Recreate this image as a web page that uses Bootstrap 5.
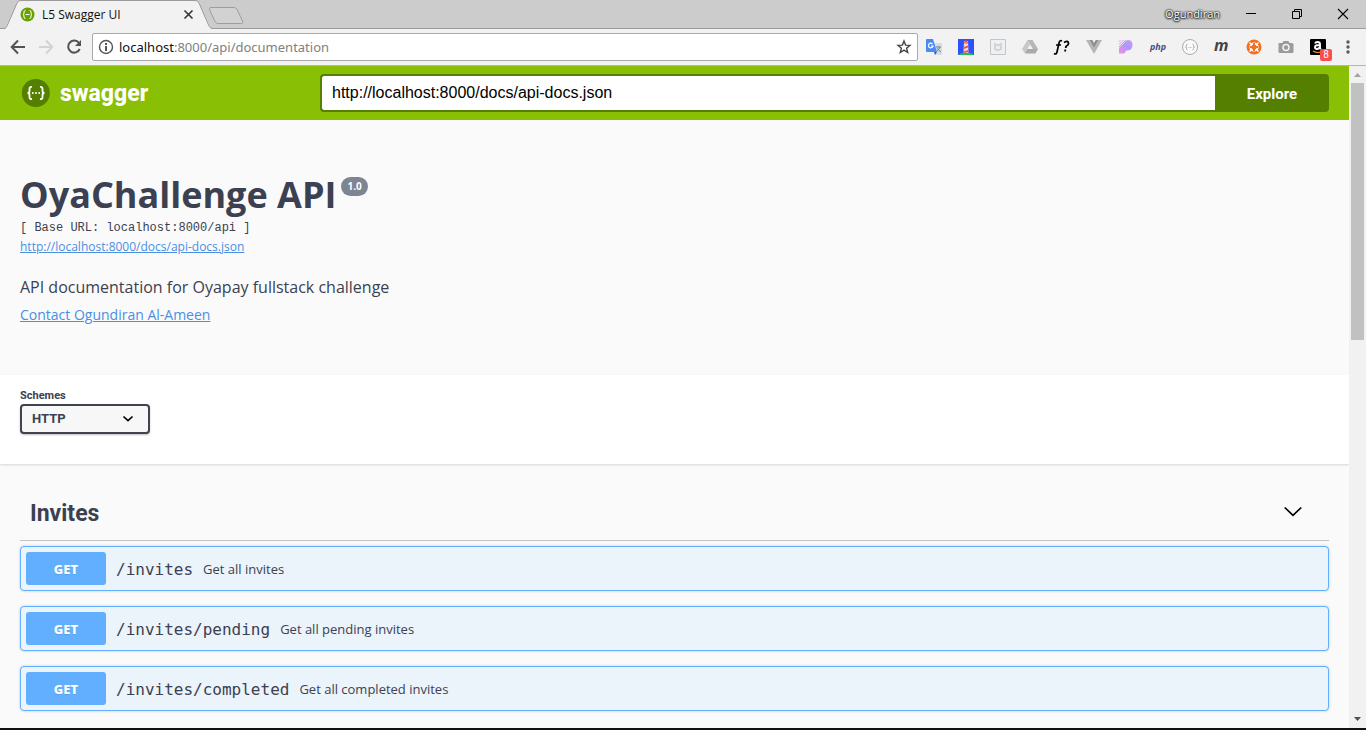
<!DOCTYPE html>
<html lang="en">
<head>
<meta charset="utf-8">
<meta name="viewport" content="width=device-width, initial-scale=1">
<title>L5 Swagger UI</title>
<link href="https://cdn.jsdelivr.net/npm/bootstrap@5.3.0/dist/css/bootstrap.min.css" rel="stylesheet">
<style>
  :root { --ink: #3b4151; --green: #89bf04; --green-dark: #547f00; --get: #61affe; }
  body { font-family: "Open Sans", sans-serif; color: var(--ink); background: #fafafa; }
  button { font-family: inherit; }
  svg { display: block; flex: none; }

  /* browser frame */
  .titlebar { height: 29px; background: #ccc; border-bottom: 1px solid #9a9a9a; }
  .browser-tab { width: 208px; height: 29px; margin-bottom: -1px; padding: 0 14px 0 20px; color: #111; }
  .browser-tab .tab-shape { position: absolute; left: 0; top: 0; }
  .tab-label { font: 12px/16px "Open Sans", sans-serif; margin-left: 7px; }
  .plain-btn { border: 0; padding: 0; background: none; color: inherit; }
  .profile { color: #fff; font: 11px/16px "Open Sans", sans-serif; text-shadow: 0 0 2px #000, 0 0 2px #000, 0 1px 2px #333; }
  .win-btn { width: 46px; height: 28px; }
  .toolbar { height: 37px; background: #f2f2f2; border-bottom: 1px solid #b6b4b6; padding: 0 16px 1px 10px; }
  .nav-gap { gap: 12px; }
  .omnibox { height: 28px; background: #fff; border: 1px solid #a9a9a9; border-radius: 2px; padding: 0 5px; margin: 0 8px 0 10px; }
  .address { font: 13px/20px "Noto Sans", sans-serif; color: #808080; padding-left: 5px; }
  .address b { font-weight: 400; color: #111; }
  .ext { width: 16px; height: 16px; }
  .ext-count { position: absolute; left: 10px; top: 10px; width: 12px; height: 12px; border-radius: 2px; background: #fb4d4d; color: #fff; font: 10px/12px Roboto, sans-serif; text-align: center; }
  .scroll-track { width: 17px; background: #f1f1f1; }
  .scroll-thumb { width: 13px; height: 257px; background: #c1c1c1; }
  .taskbar-edge { height: 2px; background: #111; }

  /* documentation page */
  .topbar { background: var(--green); padding: 8px 20px; }
  .brand { width: 300px; color: #fff; font: 800 23px/36px Roboto, sans-serif; }
  .brand span { padding-top: 2px; }
  .spec-url { height: 38px; border: 2px solid var(--green-dark); border-right: 0; border-radius: 4px 0 0 4px; padding: 0 10px; color: #000; background: #fff; font: 16px/20px "Liberation Sans", sans-serif; }
  .explore { width: 114px; border-radius: 0 4px 4px 0; background: var(--green-dark); color: #fff; font: 700 15px/20px Roboto, sans-serif; padding-top: 2px; }
  .info { padding: 50px 20px 48px; height: 255px; }
  .info h1 { font-size: 36px; font-weight: 700; line-height: 50px; }
  .version { margin: 7px 0 0 5px; height: 19px; padding: 0 6px; border-radius: 10px; background: #7d8492; color: #fff; font: 700 10px/19px "Open Sans", sans-serif; }
  .base-url { font: 12px/16px "Liberation Mono", monospace; }
  .info a { color: #4990e2; }
  .spec-link { font-size: 12px; line-height: 20px; margin-top: 1px; }
  .about { font-size: 16px; line-height: 24px; margin-top: 18px; }
  .contact { font-size: 14px; line-height: 20px; margin-top: 6px; }
  .schemes { background: #fff; height: 89px; padding: 13px 20px 30px; box-shadow: 0 1px 2px rgba(0,0,0,.15); }
  .schemes label { font: 700 11px/16px Roboto, sans-serif; }
  .scheme-select { width: 130px; height: 30px; border: 2px solid #41444e; border-radius: 4px; padding: 0 10px; color: var(--ink); font: 700 13px/20px Roboto, sans-serif; appearance: none; box-shadow: 0 1px 2px rgba(0,0,0,.25);
    background: #f7f7f7 url("data:image/svg+xml,%3Csvg xmlns='http://www.w3.org/2000/svg' width='12' height='8' fill='none' stroke='%23000' stroke-width='1.7'%3E%3Cpath d='M1.5 1.5 6 5.7 10.500 1.5'/%3E%3C/svg%3E") right 14px center no-repeat; }
  .operations { padding: 20px 20px 0; }
  .tag-head { height: 57px; padding: 0 27px 0 10px; border-bottom: 1px solid rgba(59,65,81,.3); margin-bottom: 5px; }
  .tag-head h2 { font: 700 23px/30px Roboto, sans-serif; padding-top: 3px; }
  .operation { height: 45px; padding: 5px; margin-bottom: 15px; border: 1px solid var(--get); border-radius: 4px; background: #ebf3fb; box-shadow: 0 0 3px rgba(0,0,0,.19); color: var(--ink); text-align: left; }
  .method { width: 80px; height: 33px; border-radius: 3px; background: var(--get); color: #fff; font: 800 13px/34px "Noto Sans", sans-serif; text-align: center; text-shadow: 0 1px 0 rgba(0,0,0,.1); }
  .route { font: 16px/20px "DejaVu Sans Mono", monospace; padding: 2px 10px 0; }
  .summary-text { font-size: 13px; line-height: 20px; }
</style>
</head>
<body>
<div class="d-flex flex-column vh-100 overflow-hidden">

  <header>
    <div class="titlebar d-flex">
      <div class="browser-tab position-relative d-flex align-items-center">
        <svg class="tab-shape" width="214" height="29"><path d="M5 29 17 3Q18 .5 21 .5H195Q198 .5 199 3L211 28.500 214 29Z" fill="#f2f2f2"/><path d="M0 28.500H4Q6 28.500 7 26L17 3Q18 .5 21 .5H195Q198 .5 199 3L209 26Q210 28.500 213 28.500" fill="none" stroke="#9a9a9a"/></svg>
        <svg class="position-relative" width="15" height="15" viewBox="0 0 15 15"><circle cx="7.500" cy="7.500" r="7" fill="#6a9f05"/><path d="M5.500 3.500Q4 3.500 4 5V6Q4 7.500 3 7.500 4 7.500 4 9V10Q4 11.500 5.500 11.500M9.500 3.500Q11 3.500 11 5V6Q11 7.500 12 7.500 11 7.500 11 9V10Q11 11.500 9.500 11.500M5.500 7.500H9.500" fill="none" stroke="#fff"/></svg>
        <span class="tab-label position-relative flex-grow-1">L5 Swagger UI</span>
        <button class="plain-btn position-relative" aria-label="Close tab"><svg width="11" height="11" stroke="#333" stroke-width="1.600"><path d="M1.500 1.500 9.500 9.500M9.500 1.500 1.500 9.500"/></svg></button>
      </div>
      <button class="plain-btn align-self-center" aria-label="New tab"><svg class="mt-1" width="36" height="18" fill="#d2d2d2" stroke="#9d9d9d"><path d="M1.500 2.500Q1 .500 3 .500H26Q28 .500 29 2.500L34.500 14Q35.500 16.500 33.500 16.500H10Q8 16.500 7 14.500Z"/></svg></button>
      <div class="ms-auto d-flex align-items-center">
        <span class="profile me-2">Ogundiran</span>
        <button class="plain-btn win-btn d-flex justify-content-center align-items-center" aria-label="Minimize"><svg width="10" height="10"><path d="M0 4.500H10" stroke="#000"/></svg></button>
        <button class="plain-btn win-btn d-flex justify-content-center align-items-center" aria-label="Restore"><svg width="10" height="10" fill="none" stroke="#000"><path d="M.5 2.500H7.500V9.500H.5ZM2.500 2.500V.5H9.500V7.500H7.500"/></svg></button>
        <button class="plain-btn win-btn d-flex justify-content-center align-items-center" aria-label="Close"><svg width="12" height="12" stroke="#000" stroke-width="1.100"><path d="M1 1 11 11M11 1 1 11"/></svg></button>
      </div>
    </div>

    <div class="toolbar d-flex align-items-center">
      <nav class="d-flex nav-gap" aria-label="Browser navigation">
        <button class="plain-btn" aria-label="Back"><svg width="16" height="16" fill="none" stroke="#505357" stroke-width="2"><path d="M15 8H2M8 1.500 1.700 8 8 14.500"/></svg></button>
        <button class="plain-btn" aria-label="Forward"><svg width="16" height="16" fill="none" stroke="#d2d3d4" stroke-width="2"><path d="M1 8H14M8 1.500 14.300 8 8 14.500"/></svg></button>
        <button class="plain-btn" aria-label="Reload"><svg width="16" height="16"><path d="M13 4A6 6 0 1 0 13.700 10" fill="none" stroke="#505357" stroke-width="2"/><path d="M15 1V7H9Z" fill="#505357"/></svg></button>
      </nav>
      <div class="omnibox d-flex align-items-center flex-grow-1">
        <svg width="16" height="16"><circle cx="8" cy="8" r="6.500" fill="none" stroke="#555" stroke-width="1.400"/><path d="M7 7H9V12H7ZM7 4H9V6H7Z" fill="#555"/></svg>
        <span class="address flex-grow-1"><b>localhost</b>:8000/api/documentation</span>
        <button class="plain-btn" aria-label="Bookmark"><svg width="16" height="16" viewBox="0 0 16 16" fill="none" stroke="#444" stroke-width="1.400"><path d="M8 2 9.600 6.100 14 6.400 10.600 9.200 11.700 13.500 8 11.100 4.300 13.500 5.400 9.200 2 6.400 6.400 6.100Z"/></svg></button>
      </div>
      <div class="d-flex gap-3">
        <svg class="ext" viewBox="0 0 16 16"><path d="M6 4H16V16H9Z" fill="#d9dcdf"/><path d="M1 0H7L11 13H1Q0 13 0 12V1Q0 0 1 0Z" fill="#4a8af4"/><path d="M8 13H11L9 16Z" fill="#2f61cc"/><path d="M6.500 5A2.300 2.300 0 1 0 7 7H5" fill="none" stroke="#fff" stroke-width="1.200"/><path d="M10 8H15M12.500 7V8M14 8Q13 11 10.500 12.500M11 9Q12 11 15 13" fill="none" stroke="#6f8796"/></svg>
        <svg class="ext" viewBox="0 0 16 16"><path d="M0 0H16V16H0Z" fill="#304ffe"/><path d="M6 2H10L10.500 14H5.500Z" fill="#f6d7d2"/><path d="M6 3 8 1 10 3V4.500H6ZM6 8 10 6.500V8.500L5.800 10ZM5.500 12.500 10.300 11V13L5.500 14Z" fill="#f4513b"/><path d="M6.500 3.500H9.500V5H6.500Z" fill="#ffa64a"/><path d="M0 16Q4 13 8 14 13 13 16 16Z" fill="#1fc04a"/></svg>
        <svg class="ext" viewBox="0 0 16 16" fill="none"><path d="M.5.5H15.500V15.500H.5Z" fill="#eff0f1" stroke="#c0c6ca"/><path d="M5 5 8 6.500 11 5V10L8 11.500 5 10Z" stroke="#cdd1d4" stroke-width="1.700"/></svg>
        <svg class="ext" viewBox="0 0 16 16"><path d="M5.500 1H10.500L16 10H10.800Z" fill="#b7b7b7"/><path d="M5.500 1 8 5.500 3 14.500 0 10Z" fill="#c8c8c8"/><path d="M5.500 10H16L13.500 14.500H3Z" fill="#a9a9a9"/></svg>
        <svg class="ext overflow-visible" viewBox="0 0 16 16"><path d="M8 2Q5.700.7 5 4L3 13Q2.300 16 0 14.500M2 6H7" fill="none" stroke="#000" stroke-width="1.700"/><path d="M10 3.500Q14.500 1 14.500 4.500 14.500 6 12.500 7 11.800 7.500 11.700 9M11.300 10.500 11.100 12.500" fill="none" stroke="#000" stroke-width="1.800"/></svg>
        <svg class="ext" viewBox="0 0 16 16"><path d="M0 1H3.500L8 9 12.500 1H16L8 15Z" fill="#b5b5b5"/><path d="M3.500 1H6.300L8 4 9.700 1H12.500L8 9Z" fill="#8e8e8e"/></svg>
        <svg class="ext" viewBox="0 0 16 16"><defs><linearGradient id="feather" x1="1" y1="0" x2="0" y2="1"><stop stop-color="#d990ef"/><stop offset=".45" stop-color="#a99aff"/><stop offset="1" stop-color="#f78be0"/></linearGradient></defs><path d="M1 9 8 2Q9 1 10.500 1 14.500 1.500 14.500 6 14.500 11.500 8.500 11.500L6 14.500H1Z" fill="url(#feather)"/><path d="M1 2.500 2.500 1M1 5.500 5.500 1M1 8 8 1" stroke="#dc91ee"/></svg>
        <svg class="ext overflow-visible" viewBox="0 0 16 16"><text x="0" y="11" font-family="Open Sans, sans-serif" font-style="italic" font-weight="700" font-size="9" fill="#484c89">php</text></svg>
        <svg class="ext" viewBox="0 0 16 16" fill="none" stroke="#aaa"><circle cx="8" cy="8" r="7.500" fill="#fafafa"/><path d="M5.500 5Q4.500 5 4.500 6.500T3.500 8Q4.500 8 4.500 9.500T5.500 11M10.500 5Q11.500 5 11.500 6.500T12.500 8Q11.500 8 11.500 9.500T10.500 11"/><path d="M6.500 8.500H9.500" stroke-dasharray="1"/></svg>
        <svg class="ext overflow-visible" viewBox="0 0 16 16"><text x="0" y="12" font-family="Open Sans, sans-serif" font-style="italic" font-weight="700" font-size="16" fill="#444">m</text></svg>
        <svg class="ext" viewBox="0 0 16 16"><circle cx="8" cy="8" r="7.500" fill="#f36f21"/><circle cx="8" cy="8" r="3.600" fill="none" stroke="#fff" stroke-width="2"/><path d="M8 4V6M8 10V12M4 8H6M10 8H12" stroke="#f36f21" stroke-width="2"/><path d="M3.500 3.500 5.500 5.500M12.500 3.500 10.500 5.500M3.500 12.500 5.500 10.500M12.500 12.500 10.500 10.500" stroke="#fff" stroke-width="1.200"/></svg>
        <svg class="ext" viewBox="0 0 16 16"><path d="M1 4H4.500L5.500 2H10.500L11.500 4H14Q15.500 4 15.500 5.500V13Q15.500 14 14 14H2Q.5 14 .5 13V5Q.5 4 1 4Z" fill="#9a9a9a"/><circle cx="8" cy="8.500" r="3" fill="#9a9a9a" stroke="#f2f2f2" stroke-width="1.500"/></svg>
        <div class="position-relative ext">
          <svg width="16" height="16"><rect width="16" height="16" rx="1"/><path d="M5 4.500Q5.500 3 7.500 3 10 3 10 5V8.500Q10 9.500 11 10M10 6Q5 5.800 5 8.300 5 10 7 10 9 10 10 8" fill="none" stroke="#fff" stroke-width="1.900"/><path d="M3 12Q8 15 13 12" fill="none" stroke="#f79a22" stroke-width="1.200"/></svg>
          <span class="ext-count">8</span>
        </div>
      </div>
      <button class="plain-btn ms-auto ps-3" aria-label="Menu"><svg class="ms-1" width="4" height="16" fill="#5a5a5a"><circle cx="2" cy="3" r="1.700"/><circle cx="2" cy="8" r="1.700"/><circle cx="2" cy="13" r="1.700"/></svg></button>
    </div>
  </header>

  <div class="d-flex flex-grow-1 overflow-hidden">
    <main class="flex-grow-1 overflow-hidden">
      <form class="topbar d-flex" onsubmit="return false">
        <a class="brand d-flex align-items-center text-decoration-none" href="#">
          <svg class="me-2" width="32" height="32" viewBox="0 0 32 32"><circle cx="15.800" cy="16" r="14" fill="#547f00"/><g fill="none" stroke="#fff" stroke-width="1.800"><path d="M12 10Q9.500 9.500 9.500 12V14Q9.500 16 7.500 16 9.500 16 9.500 18V20Q9.500 22.500 12 22M20 10Q22.500 9.500 22.500 12V14Q22.500 16 24.500 16 22.500 16 22.500 18V20Q22.500 22.500 20 22"/></g><g fill="#fff"><circle cx="12.800" cy="16" r="1"/><circle cx="16" cy="16" r="1"/><circle cx="19.200" cy="16" r="1"/></g></svg>
          <span>swagger</span>
        </a>
        <input class="spec-url flex-grow-1" type="text" aria-label="Specification URL" value="http://localhost:8000/docs/api-docs.json">
        <button class="plain-btn explore" type="submit">Explore</button>
      </form>

      <section class="info">
        <div class="d-flex align-items-start">
          <h1 class="m-0">OyaChallenge API</h1><span class="version">1.0</span>
        </div>
        <div class="base-url">[ Base URL: localhost:8000/api ]</div>
        <div class="spec-link"><a href="#">http://localhost:8000/docs/api-docs.json</a></div>
        <p class="about mb-0">API documentation for Oyapay fullstack challenge</p>
        <div class="contact"><a href="#">Contact Ogundiran Al-Ameen</a></div>
      </section>

      <section class="schemes d-flex flex-column position-relative">
        <label for="scheme">Schemes</label>
        <select id="scheme" class="scheme-select"><option>HTTP</option></select>
      </section>

      <section class="operations">
        <div class="tag-head d-flex align-items-center justify-content-between">
          <h2 class="m-0">Invites</h2>
          <button class="plain-btn" aria-label="Collapse Invites"><svg width="18" height="12" fill="none" stroke="#000" stroke-width="1.700"><path d="M.7 1.500 9 9.300 17.300 1.500"/></svg></button>
        </div>
        <button class="operation d-flex align-items-center w-100"><span class="method">GET</span><span class="route">/invites</span><span class="summary-text">Get all invites</span></button>
        <button class="operation d-flex align-items-center w-100"><span class="method">GET</span><span class="route">/invites/pending</span><span class="summary-text">Get all pending invites</span></button>
        <button class="operation d-flex align-items-center w-100"><span class="method">GET</span><span class="route">/invites/completed</span><span class="summary-text">Get all completed invites</span></button>
      </section>
    </main>
    <div class="scroll-track d-flex flex-column align-items-center" aria-hidden="true">
      <svg width="17" height="17"><path d="M5 11H12L8.500 7Z" fill="#a3a3a3"/></svg>
      <div class="scroll-thumb"></div>
      <svg class="mt-auto" width="17" height="17"><path d="M5 6H12L8.500 10Z" fill="#505050"/></svg>
    </div>
  </div>
  <div class="taskbar-edge"></div>
</div>
<script src="https://cdn.jsdelivr.net/npm/bootstrap@5.3.0/dist/js/bootstrap.bundle.min.js"></script>
</body>
</html>
